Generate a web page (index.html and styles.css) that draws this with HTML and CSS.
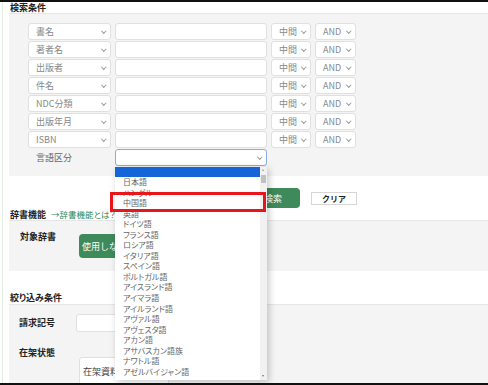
FILE: index.html
```html
<!DOCTYPE html>
<html lang="ja">
<head>
  <meta charset="UTF-8"/>
  <title>検索条件</title>
  <link rel="stylesheet" href="styles.css">
</head>
<body>
  <div class="page">
    <div class="sec-title">検索条件</div>
    <div class="panel cond">
      <div class="grid">
        <div class="sel">書名</div><div class="inp"></div><div class="sel">中間</div><div class="sel">AND</div>
        <div class="sel">著者名</div><div class="inp"></div><div class="sel">中間</div><div class="sel">AND</div>
        <div class="sel">出版者</div><div class="inp"></div><div class="sel">中間</div><div class="sel">AND</div>
        <div class="sel">件名</div><div class="inp"></div><div class="sel">中間</div><div class="sel">AND</div>
        <div class="sel">NDC分類</div><div class="inp"></div><div class="sel">中間</div><div class="sel">AND</div>
        <div class="sel">出版年月</div><div class="inp"></div><div class="sel">中間</div><div class="sel">AND</div>
        <div class="sel">ISBN</div><div class="inp"></div><div class="sel">中間</div><div class="sel">AND</div>
        <div class="lbl">言語区分</div>
        <div class="sel focus">
          <div class="drop">
            <div class="opt on"></div>
            <div class="opt">日本語</div>
            <div class="opt">ハングル</div>
            <div class="opt">中国語</div>
            <div class="opt">英語</div>
            <div class="opt">ドイツ語</div>
            <div class="opt">フランス語</div>
            <div class="opt">ロシア語</div>
            <div class="opt">イタリア語</div>
            <div class="opt">スペイン語</div>
            <div class="opt">ポルトガル語</div>
            <div class="opt">アイスランド語</div>
            <div class="opt">アイマラ語</div>
            <div class="opt">アイルランド語</div>
            <div class="opt">アヴァル語</div>
            <div class="opt">アヴェスタ語</div>
            <div class="opt">アカン語</div>
            <div class="opt">アサバスカン語族</div>
            <div class="opt">ナワトル語</div>
            <div class="opt">アゼルバイジャン語</div>
            <div class="scroll">
              <span class="arr up"></span>
              <span class="thumb"></span>
              <span class="arr down"></span>
            </div>
            <div class="mark"></div>
          </div>
        </div>
      </div>
    </div>
    <div class="actions">
      <button class="btn-search">検索</button>
      <button class="btn-clear">クリア</button>
    </div>
    <div class="sec-title dict">辞書機能<a class="link">→辞書機能とは？(外部サイト)</a></div>
    <div class="panel dict-panel">
      <div class="plbl">対象辞書</div>
      <button class="btn-toggle">使用しない</button>
    </div>
    <div class="sec-title narrow">絞り込み条件</div>
    <div class="panel filter">
      <div class="frow">
        <div class="flbl">請求記号</div>
        <div class="finp"></div>
      </div>
      <div class="frow second">
        <div class="flbl up">在架状態</div>
        <div class="fsel">在架資料のみ</div>
      </div>
    </div>
  </div>
</body>
</html>
```

FILE: styles.css
```css
html, body { margin:0; padding:0; }
body {
  width:488px; height:385px; box-sizing:border-box; overflow:hidden;
  border-top:2px solid #111; border-bottom:2px solid #111;
  background:#fff; color:#222;
  font-family:"Noto Sans CJK JP","Noto Sans",sans-serif; font-size:9px;
  font-feature-settings:"palt";
}
.page { height:100%; margin-left:2px; border-left:1px solid #e2ece2; overflow:hidden; }
.sec-title { height:11px; line-height:11px; padding-left:7px; font-weight:bold; font-size:9px; }
.panel { margin-left:6px; border-top:1px solid #e6e6e6; background:#f4f4f4; }
.cond { padding:9px 0 10px 19px; }
.grid {
  display:grid; grid-template-columns:83px 152px 40px 41px;
  grid-auto-rows:17px; column-gap:4px; row-gap:1px;
}
.sel, .inp {
  position:relative; box-sizing:border-box; background:#fff;
  border:1px solid #e0e0e0; border-radius:3px;
  padding-left:7px; line-height:15px; color:#888;
}
.sel::after {
  content:""; position:absolute; right:5px; top:5px; width:2.5px; height:2.5px;
  border-right:1px solid #999; border-bottom:1px solid #999; transform:rotate(45deg);
}
.lbl { padding-left:8px; line-height:17px; color:#666; }
.sel.focus { border-color:#86aee4; }
.drop {
  position:absolute; z-index:10; left:-1px; top:17px; width:152px; height:213px;
  background:#fff; box-shadow:2px 2px 7px rgba(0,0,0,.22);
}
.opt {
  width:145px; height:10.55px; line-height:10.55px; padding-left:8px; box-sizing:border-box;
  font-size:8px; color:#666; white-space:nowrap;
}
.opt.on { height:10px; background:#1565d8; }
.scroll { position:absolute; right:0; top:0; bottom:0; width:7px; background:#f1f1f1; }
.thumb { position:absolute; left:1px; right:1px; top:8px; height:8px; background:#c1c1c1; }
.arr { position:absolute; left:2px; width:0; height:0; border-left:1.5px solid transparent; border-right:1.5px solid transparent; }
.arr.up { top:2px; border-bottom:2px solid #999; }
.arr.down { bottom:3px; border-top:2px solid #777; }
.mark {
  position:absolute; left:-5px; top:25px; width:156px; height:20px;
  box-sizing:border-box; border:3px solid #e8161b;
}
.actions { display:flex; align-items:flex-start; height:32px; }
.actions button { font-family:inherit; cursor:pointer; }
.btn-search {
  margin:12px 0 0 219px; width:78px; height:20px; border:none; border-radius:4px;
  background:#3e8a5b; color:#fff; font-size:9px; text-align:right; padding:0 18px 0 0;
}
.btn-clear {
  margin:16px 0 0 11px; width:46px; height:13px; border:1px solid #d6d6d6; padding:0;
  background:#fff; color:#222; font-size:8px; font-weight:bold; line-height:11px;
}
.dict { height:12px; line-height:12px; }
.link { margin-left:5px; color:#2f8a5a; font-weight:normal; font-size:8.5px; }
.dict-panel { display:flex; align-items:flex-start; padding:13px 0 13px 11px; }
.plbl { width:59px; margin-top:-3px; line-height:12px; font-weight:bold; }
.btn-toggle {
  width:82px; height:24px; border:none; border-radius:4px; background:#3e8a5b;
  color:#fff; font-family:inherit; font-size:9px; text-align:left; padding:0 0 0 3px;
}
.narrow { height:33px; line-height:12px; padding-top:21px; box-sizing:border-box; }
.filter { height:80px; padding:9px 0 0 10px; }
.frow { display:flex; align-items:center; }
.frow.second { align-items:flex-start; margin-top:25px; }
.flbl { width:57px; font-weight:bold; line-height:12px; }
.flbl.up { width:60px; margin-top:-10px; }
.finp {
  width:90px; height:18px; box-sizing:border-box; background:#fff;
  border:1px solid #e0e0e0; border-radius:3px;
}
.fsel {
  width:90px; height:28px; box-sizing:border-box; background:#fff;
  border:1px solid #e0e0e0; border-radius:3px; padding:7px 0 0 3px; color:#444;
}
```
